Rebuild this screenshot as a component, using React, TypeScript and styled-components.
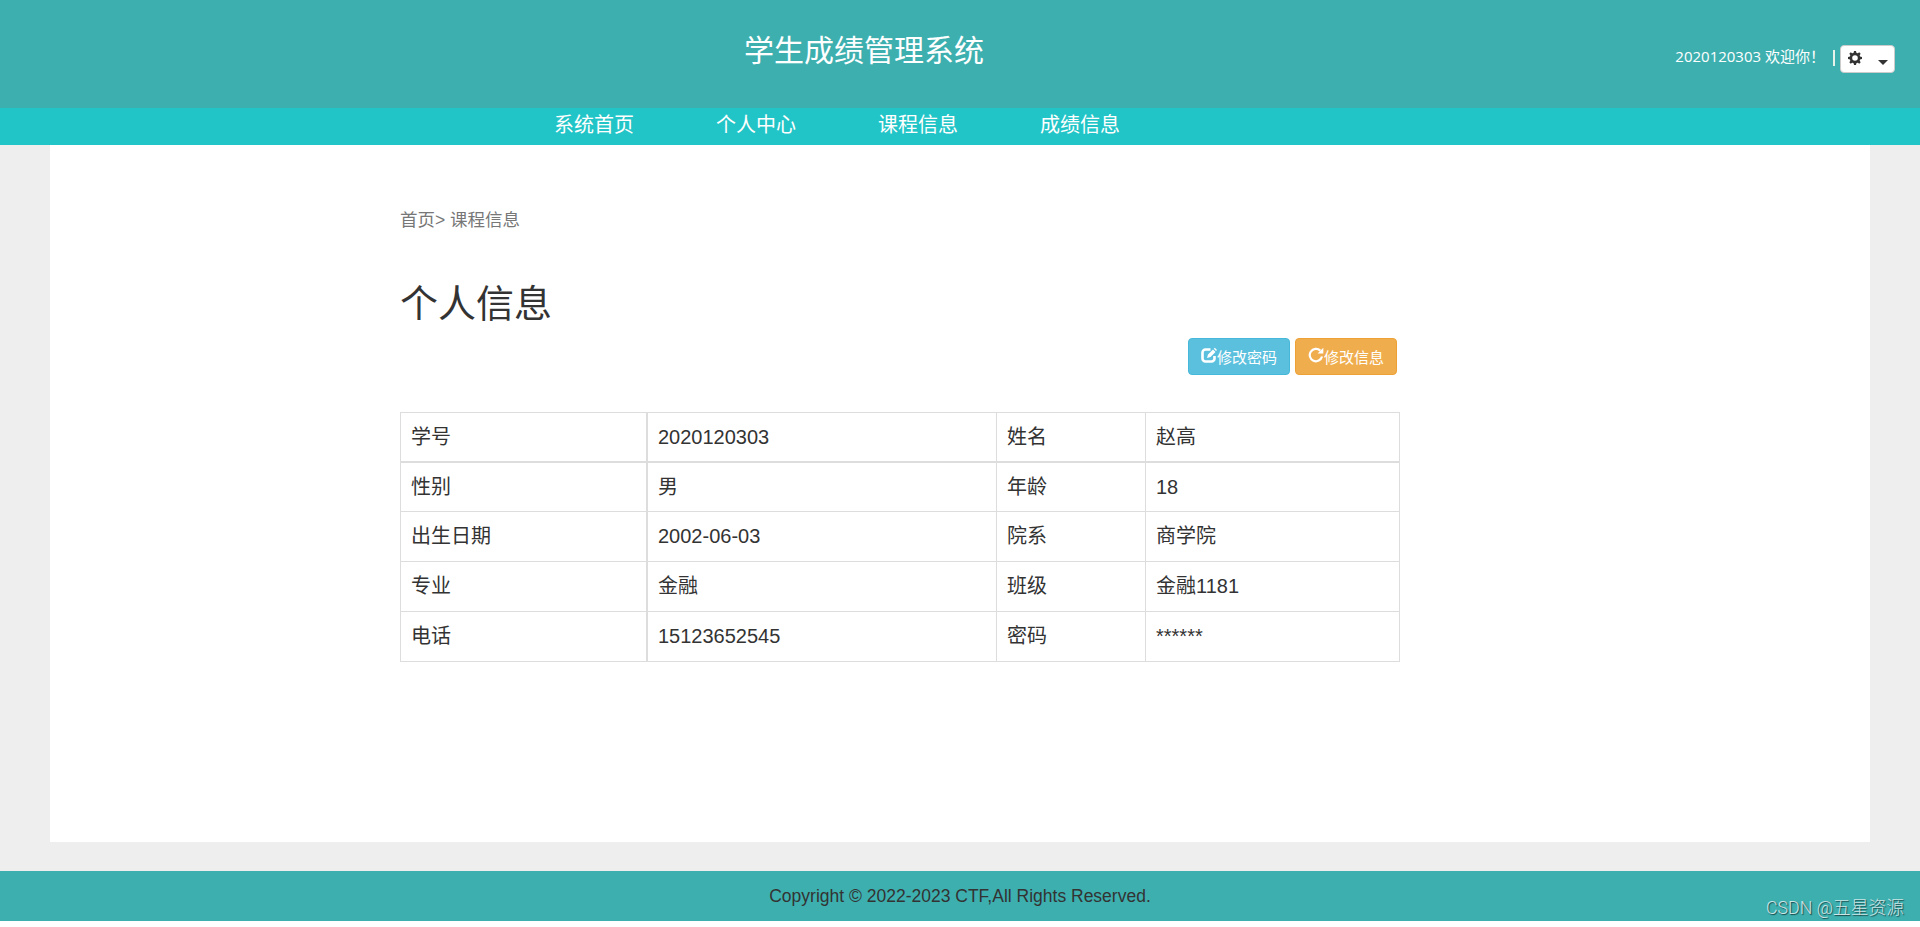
import React from "react";
import styled, { createGlobalStyle } from "styled-components";

const sans = `"Liberation Sans", "Noto Sans CJK SC", sans-serif`;
const ui = `"Open Sans", "Noto Sans CJK SC", sans-serif`;

const GlobalStyle = createGlobalStyle`
  * { box-sizing: border-box; }
  body { margin: 0; background: #fff; font-family: ${sans}; color: #333; }
`;

const Page = styled.div`
  position: relative;
  height: 927px;
  overflow: hidden;
`;

const Header = styled.header`
  height: 108px;
  background: #3dafaf;
  color: #fff;
  display: flex;
  justify-content: space-between;
`;

const Title = styled.h1`
  margin: 29px 0 0 744px;
  font-size: 30px;
  line-height: 44px;
  font-weight: 400;
`;

const UserBar = styled.div`
  display: flex;
  align-items: center;
  height: 28px;
  margin: 45px 25px 0 0;
  font-family: ${ui};
  font-size: 15px;
  line-height: 24px;
`;

const Welcome = styled.span`
  margin-top: -7px;
  white-space: nowrap;
`;

const Divider = styled.span`
  width: 2px;
  height: 16px;
  margin: -2px 5px 0 8px;
  background: #e6f2ea;
`;

const GearButton = styled.button`
  width: 55px;
  height: 28px;
  padding: 0 6px 0 7px;
  display: flex;
  align-items: center;
  justify-content: space-between;
  background: #fff;
  border: 1px solid #ccc;
  border-radius: 4px;

  svg { margin-top: -2px; }
`;

const Caret = styled.span`
  margin-top: 6px;
  border: 5px solid transparent;
  border-top-color: #333;
  border-bottom: 0;
`;

const Nav = styled.nav`
  height: 37px;
  padding-left: 554px;
  display: flex;
  gap: 82px;
  background: #22c5c7;
`;

const NavLink = styled.a`
  width: 80px;
  font-size: 20px;
  line-height: 35px;
  color: #fff;
  white-space: nowrap;
`;

const Body = styled.div`
  padding: 0 50px 29px;
  background: #eee;
`;

const Panel = styled.main`
  height: 697px;
  padding: 62px 470px 0 350px;
  background: #fff;
`;

const Breadcrumb = styled.div`
  height: 27px;
  font-size: 17.5px;
  line-height: 27px;
  color: #777;
`;

const Heading = styled.h2`
  margin: 42px 0 0;
  height: 55px;
  font-size: 38px;
  line-height: 56px;
  font-weight: 400;
`;

const Actions = styled.div`
  display: flex;
  justify-content: flex-end;
  gap: 5px;
  margin: 7px 3px 37px 0;
`;

const ActionButton = styled.button<{ $bg: string; $line: string }>`
  width: 102px;
  height: 37px;
  padding: 2px 12px 0;
  display: flex;
  align-items: center;
  font-family: ${sans};
  font-size: 15px;
  line-height: 22px;
  white-space: nowrap;
  color: #fff;
  background: ${(p) => p.$bg};
  border: 1px solid ${(p) => p.$line};
  border-radius: 4px;

  svg { flex: none; margin-top: -5px; }
`;

const Table = styled.table`
  width: 1000px;
  table-layout: fixed;
  border-collapse: separate;
  border-spacing: 0;
  border: solid #ddd;
  border-width: 1px 0 0 1px;
  font-size: 20px;
`;

const Row = styled.tr<{ $height: number }>`
  height: ${(p) => p.$height}px;
`;

const Cell = styled.td<{ $first: boolean; $wideRight: boolean }>`
  padding: 10px 0 0 10px;
  vertical-align: top;
  line-height: 28px;
  border: solid #ddd;
  border-width: 0 ${(p) => (p.$wideRight ? 2 : 1)}px ${(p) => (p.$first ? 2 : 1)}px 0;
`;

const Footer = styled.footer`
  height: 50px;
  background: #3dafaf;
  font-size: 17.5px;
  line-height: 50px;
  text-align: center;
`;

const Watermark = styled.div`
  position: absolute;
  right: 16px;
  top: 894px;
  font-family: Roboto, "Noto Sans CJK SC", sans-serif;
  font-size: 17.8px;
  font-weight: 300;
  line-height: 27px;
  color: rgba(255, 255, 255, 0.75);
  text-shadow: 1px 1px 1px rgba(0, 0, 0, 0.6);
`;

const GearIcon = () => (
  <svg width="14" height="14" viewBox="0 0 14 14">
    <circle cx="7" cy="7" r="4.100" fill="none" stroke="#333" strokeWidth="2.600" />
    {[0, 45, 90, 135, 180, 225, 270, 315].map((angle) => (
      <path key={angle} d="M5.500 2.400 6 0h2l.5 2.400z" fill="#333" transform={`rotate(${angle} 7 7)`} />
    ))}
  </svg>
);

const EditIcon = () => (
  <svg width="16" height="16" viewBox="0 0 16 16" fill="none" stroke="#fff">
    <path d="M9.500 2.500H4.500A3 3 0 0 0 1.500 5.500v6A3 3 0 0 0 4.500 14.500h6a3 3 0 0 0 3-3V9" strokeWidth="2.600" />
    <path d="M6 11l1-3.500 5-5 2.500 2.500-5 5zM12.800 1.800l1-1 2.200 2.200-1 1z" fill="#fff" stroke="none" />
  </svg>
);

const RefreshIcon = () => (
  <svg width="16" height="16" viewBox="0 0 16 16">
    <path d="M12.300 3.600A6.200 6.200 0 1 0 14 9.500" fill="none" stroke="#fff" strokeWidth="2.200" />
    <path d="M15.300 .8v5.700H9.600z" fill="#fff" />
  </svg>
);

const links = ["系统首页", "个人中心", "课程信息", "成绩信息"];
const widths = [247, 349, 149, 254];
const rows = [
  { height: 50, cells: ["学号", "2020120303", "姓名", "赵高"] },
  { height: 49, cells: ["性别", "男", "年龄", "18"] },
  { height: 50, cells: ["出生日期", "2002-06-03", "院系", "商学院"] },
  { height: 50, cells: ["专业", "金融", "班级", "金融1181"] },
  { height: 50, cells: ["电话", "15123652545", "密码", "******"] },
];

export default function App() {
  return (
    <Page>
      <GlobalStyle />
      <Header>
        <Title>学生成绩管理系统</Title>
        <UserBar>
          <Welcome>2020120303 欢迎你！</Welcome>
          <Divider />
          <GearButton aria-label="设置">
            <GearIcon />
            <Caret />
          </GearButton>
        </UserBar>
      </Header>
      <Nav>
        {links.map((text) => (
          <NavLink key={text}>{text}</NavLink>
        ))}
      </Nav>
      <Body>
        <Panel>
          <Breadcrumb>首页&gt; 课程信息</Breadcrumb>
          <Heading>个人信息</Heading>
          <Actions>
            <ActionButton $bg="#5bc0de" $line="#46b8da">
              <EditIcon />
              修改密码
            </ActionButton>
            <ActionButton $bg="#f0ad4e" $line="#eea236">
              <RefreshIcon />
              修改信息
            </ActionButton>
          </Actions>
          <Table>
            <colgroup>
              {widths.map((width) => (
                <col key={width} width={width} />
              ))}
            </colgroup>
            <tbody>
              {rows.map((row, r) => (
                <Row key={row.cells[0]} $height={row.height}>
                  {row.cells.map((text, c) => (
                    <Cell key={c} $first={r === 0} $wideRight={c === 0}>
                      {text}
                    </Cell>
                  ))}
                </Row>
              ))}
            </tbody>
          </Table>
        </Panel>
      </Body>
      <Footer>Copyright © 2022-2023 CTF,All Rights Reserved.</Footer>
      <Watermark>CSDN @五星资源</Watermark>
    </Page>
  );
}
